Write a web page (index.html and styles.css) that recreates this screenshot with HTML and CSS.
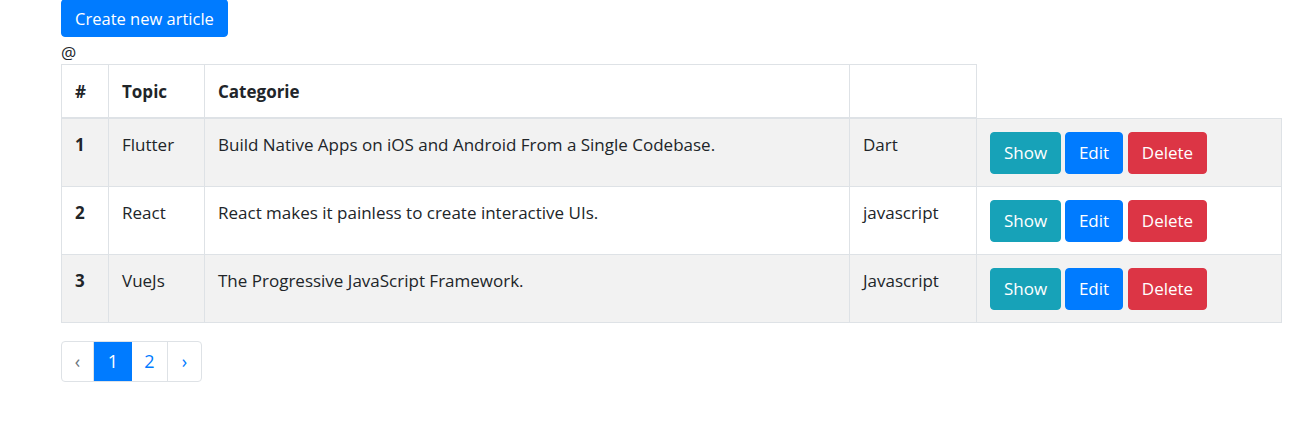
FILE: index.html
```html
<!DOCTYPE html>
<html lang="en">
<head>
<meta charset="utf-8">
<title>Articles</title>
<link rel="stylesheet" href="styles.css">
</head>
<body>
<div class="page">
  <div class="toolbar">
    <a class="btn btn-primary btn-create" href="#">Create new article</a>
  </div>
  <div class="at-line">@</div>
  <table class="articles">
    <colgroup>
      <col class="c-num">
      <col class="c-topic">
      <col class="c-cat">
      <col class="c-lang">
      <col class="c-act">
    </colgroup>
    <thead>
      <tr>
        <th>#</th>
        <th>Topic</th>
        <th>Categorie</th>
        <th></th>
      </tr>
    </thead>
    <tbody>
      <tr class="striped">
        <td class="num">1</td>
        <td>Flutter</td>
        <td>Build Native Apps on iOS and Android From a Single Codebase.</td>
        <td>Dart</td>
        <td class="actions"><div class="btn-group"><a class="btn btn-info" href="#">Show</a><a class="btn btn-primary" href="#">Edit</a><a class="btn btn-danger" href="#">Delete</a></div></td>
      </tr>
      <tr>
        <td class="num">2</td>
        <td>React</td>
        <td>React makes it painless to create interactive UIs.</td>
        <td>javascript</td>
        <td class="actions"><div class="btn-group"><a class="btn btn-info" href="#">Show</a><a class="btn btn-primary" href="#">Edit</a><a class="btn btn-danger" href="#">Delete</a></div></td>
      </tr>
      <tr class="striped">
        <td class="num">3</td>
        <td>VueJs</td>
        <td>The Progressive JavaScript Framework.</td>
        <td>Javascript</td>
        <td class="actions"><div class="btn-group"><a class="btn btn-info" href="#">Show</a><a class="btn btn-primary" href="#">Edit</a><a class="btn btn-danger" href="#">Delete</a></div></td>
      </tr>
    </tbody>
  </table>
  <nav class="pager">
    <span class="page-item prev">&lsaquo;</span>
    <span class="page-item active">1</span>
    <a class="page-item p2" href="#">2</a>
    <a class="page-item next" href="#">&rsaquo;</a>
  </nav>
</div>
</body>
</html>
```
FILE: styles.css
```css
html, body {
  margin: 0;
  padding: 0;
  background: #fff;
}
body {
  font-family: "Open Sans", "Noto Sans", "Liberation Sans", sans-serif;
  font-size: 17px;
  line-height: 24px;
  color: #212529;
}
.page {
  padding-left: 61px;
}
.toolbar {
  height: 40px;
}
.btn {
  display: inline-block;
  box-sizing: border-box;
  color: #fff;
  text-decoration: none;
  font-size: 17px;
  white-space: nowrap;
  border-radius: 4px;
  border: 1px solid transparent;
  text-align: center;
}
.btn-create {
  margin-top: -1px;
  height: 38px;
  line-height: 37px;
  padding: 0;
  width: 167px;
  font-size: 16.5px;
}
.btn-primary { background: #007bff; border-color: #007bff; }
.btn-info { background: #17a2b8; border-color: #17a2b8; }
.btn-danger { background: #dc3545; border-color: #dc3545; }
.at-line {
  height: 24px;
  line-height: 25px;
}
.articles {
  border-collapse: collapse;
  table-layout: fixed;
  width: 1221px;
}
.c-num { width: 47px; }
.c-topic { width: 96px; }
.c-cat { width: 645px; }
.c-lang { width: 127px; }
.c-act { width: 305px; }
.articles th,
.articles td {
  border: 1px solid #dee2e6;
  text-align: left;
  vertical-align: top;
  padding: 14px 13px 12px 13px;
}
.articles th {
  font-weight: 700;
  padding: 15px 13px 13px 13px;
  border-bottom: 2px solid #dee2e6;
}
.articles td.num {
  font-weight: 700;
}
.articles tr.striped td {
  background: #f2f2f2;
}
.articles td.actions {
  padding-top: 13px;
  padding-bottom: 12px;
}
.btn-group {
  display: flex;
  gap: 4px;
  height: 42px;
}
.btn-group .btn {
  height: 42px;
  line-height: 40px;
  padding: 0;
}
.btn-group .btn-info { width: 71px; }
.btn-group .btn-primary { width: 58px; }
.btn-group .btn-danger { width: 79px; margin-left: 1px; }
.pager {
  display: flex;
  margin-top: 18px;
  width: max-content;
  border: 1px solid #dee2e6;
  border-radius: 4px;
  overflow: hidden;
  height: 39px;
}
.page-item {
  display: block;
  box-sizing: border-box;
  height: 39px;
  line-height: 39px;
  text-align: center;
  font-size: 18px;
  color: #007bff;
  text-decoration: none;
}
.page-item.prev { width: 32px; color: #6c757d; border-right: 1px solid #dee2e6; }
.page-item.active { width: 38px; background: #007bff; color: #fff; }
.page-item.p2 { width: 36px; border-right: 1px solid #dee2e6; }
.page-item.next { width: 33px; }
```
